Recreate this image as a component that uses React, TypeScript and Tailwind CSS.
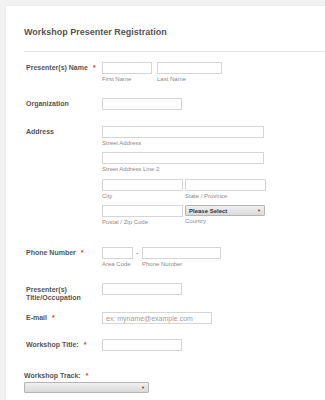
import React from "react";

const font = { fontFamily: '"Liberation Sans", Arial, sans-serif' };

function Input({ w, placeholder }: { w: string; placeholder?: string }) {
  return (
    <div className={`${w} h-[12px] border border-[#d6d6d6] bg-white flex items-center pl-[3px] text-[7px] text-[#a0a0a0] leading-none`}>
      {placeholder}
    </div>
  );
}

function Sub({ children }: { children: React.ReactNode }) {
  return <div className="text-[6px] leading-none text-[#8a8a8a] mt-[2px]">{children}</div>;
}

function Star() {
  return <span className="text-[#e0383b] ml-[5px]">*</span>;
}

function Label({ children, req }: { children: React.ReactNode; req?: boolean }) {
  return (
    <div className="w-[78px] pl-[2px] pt-[2px] text-[7px] font-bold leading-[8px] text-[#555]">
      {children}
      {req && <Star />}
    </div>
  );
}

function SelectBox({ w, text }: { w: string; text?: string }) {
  return (
    <div className={`${w} h-[11px] border border-[#b5b5b5] rounded-[1px] bg-gradient-to-b from-[#f0f0f0] to-[#d9d9d9] flex items-center justify-between px-[3px] text-[6px] font-bold text-[#333] leading-none`}>
      <span>{text}</span>
      <span className="text-[4px] text-[#444]">▼</span>
    </div>
  );
}

export default function App() {
  return (
    <div style={font} className="w-[325px] h-[400px] overflow-hidden bg-[#f2f2f2] pt-[6px] pl-[6px]">
      <div className="w-[340px] h-[420px] bg-white shadow-[0_0_2px_rgba(0,0,0,0.08)] pl-[18px]">
        <div className="pt-[21px] h-[45px] text-[9px] font-bold text-[#555] leading-[10px]">
          Workshop Presenter Registration
        </div>
        <div className="h-px bg-[#e4e4e4]" />

        <div className="pt-[10px]">
          {/* Name */}
          <div className="flex h-[36px]">
            <Label req>Presenter(s) Name</Label>
            <div className="flex gap-[5px]">
              <div>
                <Input w="w-[50px]" />
                <Sub>First Name</Sub>
              </div>
              <div>
                <Input w="w-[65px]" />
                <Sub>Last Name</Sub>
              </div>
            </div>
          </div>

          {/* Organization */}
          <div className="flex h-[28px]">
            <Label>Organization</Label>
            <Input w="w-[80px]" />
          </div>

          {/* Address */}
          <div className="flex h-[121px]">
            <Label>Address</Label>
            <div>
              <div className="h-[26px]">
                <Input w="w-[162px]" />
                <Sub>Street Address</Sub>
              </div>
              <div className="h-[27px]">
                <Input w="w-[162px]" />
                <Sub>Street Address Line 2</Sub>
              </div>
              <div className="h-[26px] flex gap-[2px]">
                <div>
                  <Input w="w-[81px]" />
                  <Sub>City</Sub>
                </div>
                <div>
                  <Input w="w-[81px]" />
                  <Sub>State / Province</Sub>
                </div>
              </div>
              <div className="flex gap-[2px]">
                <div>
                  <Input w="w-[81px]" />
                  <Sub>Postal / Zip Code</Sub>
                </div>
                <div>
                  <SelectBox w="w-[80px]" text="Please Select" />
                  <Sub>Country</Sub>
                </div>
              </div>
            </div>
          </div>

          {/* Phone */}
          <div className="flex h-[36px]">
            <Label req>Phone Number</Label>
            <div className="flex">
              <div>
                <Input w="w-[31px]" />
                <Sub>Area Code</Sub>
              </div>
              <div className="w-[9px] text-center text-[7px] leading-[12px] text-[#555]">-</div>
              <div>
                <Input w="w-[79px]" />
                <Sub>Phone Number</Sub>
              </div>
            </div>
          </div>

          {/* Title/Occupation */}
          <div className="flex h-[29px]">
            <Label>
              <div className="pt-[1px]">Presenter(s)</div>
              <div>Title/Occupation</div>
            </Label>
            <Input w="w-[80px]" />
          </div>

          {/* Email */}
          <div className="flex h-[27px]">
            <Label req>E-mail</Label>
            <Input w="w-[110px]" placeholder="ex: myname@example.com" />
          </div>

          {/* Workshop Title */}
          <div className="flex h-[32px]">
            <Label req>Workshop Title:</Label>
            <Input w="w-[80px]" />
          </div>

          {/* Workshop Track */}
          <div>
            <div className="text-[7px] font-bold leading-[8px] text-[#555] pt-[1px]">
              Workshop Track:
              <Star />
            </div>
            <div className="mt-[2px]">
              <SelectBox w="w-[125px]" />
            </div>
          </div>
        </div>
      </div>
    </div>
  );
}
